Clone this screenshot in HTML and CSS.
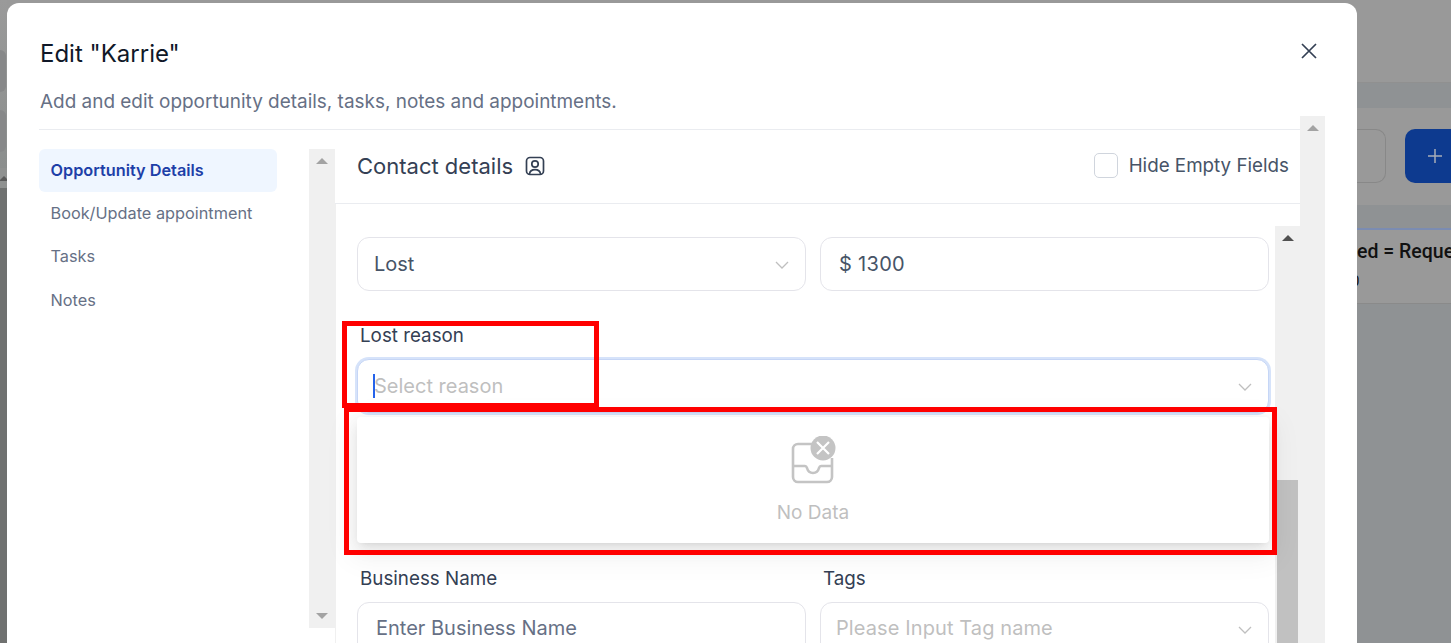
FILE: index.html
```html
<!DOCTYPE html>
<html lang="en">
<head>
    <meta charset="UTF-8">
    <meta name="viewport" content="width=device-width, initial-scale=1.0">
    <title>Edit opportunity</title>
    <link rel="stylesheet" href="styles.css">
</head>
<body>
    <div class="page">
        <!-- dimmed page behind the modal -->
        <div class="backdrop">
            <div class="bg-left">
                <div class="bg-left-top"><span class="bg-blob"></span><span class="bg-blob"></span></div>
                <div class="bg-left-strip"><span class="bg-tri"></span></div>
                <div class="bg-left-bottom"></div>
            </div>
            <div class="bg-right">
                <div class="bg-bar bg-bar-1"></div>
                <div class="bg-gap bg-gap-1"></div>
                <div class="bg-toolbar">
                    <div class="bg-input"></div>
                    <div class="bg-add">
                        <svg width="16" height="16" viewBox="0 0 16 16"><path d="M8 1v14M1 8h14" stroke="#a8adb8" stroke-width="1.5" fill="none"/></svg>
                    </div>
                </div>
                <div class="bg-gap bg-gap-2"></div>
                <div class="bg-card">
                    <div class="bg-card-title">ed = Requested</div>
                    <div class="bg-card-sub">0</div>
                </div>
                <div class="bg-gap bg-gap-3"></div>
            </div>
        </div>

        <div class="modal">
            <div class="modal-head">
                <h2 class="modal-title">Edit "Karrie"</h2>
                <p class="modal-sub">Add and edit opportunity details, tasks, notes and appointments.</p>
                <button class="close-btn" aria-label="Close">
                    <svg width="18" height="18" viewBox="0 0 18 18"><path d="M2 2l14 14M16 2L2 16" stroke="#344054" stroke-width="1.7" fill="none"/></svg>
                </button>
            </div>

            <div class="outer-scroll">
                <div class="outer-main">
                    <div class="columns">
                        <ul class="side-nav">
                            <li class="side-item active">Opportunity Details</li>
                            <li class="side-item">Book/Update appointment</li>
                            <li class="side-item">Tasks</li>
                            <li class="side-item">Notes</li>
                        </ul>
                        <div class="scrollbar side-scrollbar">
                            <span class="arrow-up"></span>
                            <span class="arrow-down"></span>
                        </div>
                        <div class="panel">
                            <div class="panel-head">
                                <div class="panel-title">
                                    Contact details
                                    <svg width="20" height="20" viewBox="0 0 20 20" fill="none" stroke="#344054" stroke-width="1.7">
                                        <rect x="1.5" y="1.5" width="17" height="17" rx="3.5"/>
                                        <circle cx="10" cy="8" r="3.2"/>
                                        <path d="M4.5 18c.4-3 2.5-4.3 5.5-4.3s5.100 1.300 5.500 4.300"/>
                                    </svg>
                                </div>
                                <label class="hide-empty"><span class="checkbox"></span>Hide Empty Fields</label>
                            </div>
                            <div class="panel-body">
                                <div class="form">
                                    <div class="row">
                                        <div class="control">
                                            <span class="value">Lost</span>
                                            <svg class="chevron" width="14" height="8" viewBox="0 0 14 8"><path d="M1 1l6 6 6-6" stroke="#bfbfbf" stroke-width="1.3" fill="none"/></svg>
                                        </div>
                                        <div class="control control-money"><span class="value">$ 1300</span></div>
                                    </div>

                                    <div class="field-label lost-label">Lost reason</div>
                                    <div class="control control-focus">
                                        <span class="caret"></span>
                                        <span class="placeholder">Select reason</span>
                                        <svg class="chevron" width="14" height="8" viewBox="0 0 14 8"><path d="M1 1l6 6 6-6" stroke="#bfbfbf" stroke-width="1.3" fill="none"/></svg>
                                    </div>
                                    <div class="dropdown">
                                        <svg class="empty-icon" width="46" height="50" viewBox="0 0 46 50" fill="none">
                                            <path d="M22 8H8a5 5 0 0 0-5 5v28a5 5 0 0 0 5 5h29a5 5 0 0 0 5-5V22" stroke="#c4c4c4" stroke-width="2.6"/>
                                            <path d="M3 30h12c1 0 1.500.5 2 2 .8 3 3 5 6 5s5.200-2 6-5c.5-1.500 1-2 2-2h11" stroke="#c4c4c4" stroke-width="2.600"/>
                                            <circle cx="33" cy="12" r="12.500" fill="#c4c4c4"/>
                                            <path d="M27 6l12 12M39 6L27 18" stroke="#fff" stroke-width="2.200"/>
                                        </svg>
                                        <div class="empty-text">No Data</div>
                                    </div>

                                    <div class="row row-labels">
                                        <div class="field-label">Business Name</div>
                                        <div class="field-label">Tags</div>
                                    </div>
                                    <div class="row">
                                        <div class="control"><span class="input-hint">Enter Business Name</span></div>
                                        <div class="control control-tags">
                                            <span class="placeholder">Please Input Tag name</span>
                                            <svg class="chevron" width="14" height="8" viewBox="0 0 14 8"><path d="M1 1l6 6 6-6" stroke="#bfbfbf" stroke-width="1.3" fill="none"/></svg>
                                        </div>
                                    </div>
                                </div>
                                <div class="scrollbar form-scrollbar">
                                    <span class="arrow-up dark"></span>
                                    <div class="thumb"></div>
                                </div>
                            </div>
                        </div>
                    </div>
                </div>
                <div class="scrollbar outer-scrollbar">
                    <span class="arrow-up"></span>
                </div>
            </div>
        </div>

        <!-- annotation boxes drawn over the screenshot -->
        <div class="mark mark-label"></div>
        <div class="mark mark-list"></div>
    </div>
</body>
</html>
```

FILE: styles.css
```css
* {
    box-sizing: border-box;
}
html, body {
    margin: 0;
    height: 100%;
    overflow: hidden;
}
body {
    font-family: Inter, "Liberation Sans", sans-serif;
    background-color: #999;
}
.page {
    position: relative;
    width: 1451px;
    height: 643px;
    overflow: hidden;
}

/* backdrop */
.backdrop {
    display: flex;
    justify-content: space-between;
    height: 100%;
}
.bg-left {
    width: 7px;
    display: flex;
    flex-direction: column;
}
.bg-left-top {
    height: 168px;
    padding-top: 50px;
    background: linear-gradient(#9a9a9a, #8b8e8d);
}
.bg-blob {
    display: block;
    width: 6px;
    height: 42px;
    margin-bottom: 18px;
    border-radius: 0 6px 6px 0;
    background-color: #878889;
}
.bg-left-strip {
    height: 20px;
    background-color: #8f9190;
    position: relative;
}
.bg-tri {
    position: absolute;
    left: -1px;
    top: 8px;
    border-left: 5px solid transparent;
    border-right: 5px solid transparent;
    border-bottom: 5px solid #5a5a5a;
}
.bg-left-bottom {
    flex-grow: 1;
    background-color: #6f7170;
}
.bg-right {
    width: 94px;
    display: flex;
    flex-direction: column;
    background-color: #8f9294;
}
.bg-bar-1 {
    height: 83px;
    background-color: #999;
    border-bottom: 1px solid #909090;
}
.bg-gap-1 {
    height: 25px;
}
.bg-toolbar {
    height: 97px;
    background-color: #999;
    display: flex;
    gap: 19px;
    padding-top: 21px;
}
.bg-input {
    flex-shrink: 0;
    width: 29px;
    height: 54px;
    border: 1px solid #888;
    border-left: none;
    border-radius: 0 10px 10px 0;
}
.bg-add {
    flex-shrink: 0;
    width: 60px;
    height: 54px;
    background-color: #0d3a8f;
    border-radius: 10px;
    display: flex;
    align-items: center;
    padding-left: 22px;
}
.bg-gap-2 {
    height: 23px;
}
.bg-card {
    height: 76px;
    background-color: #999;
    border-top: 2px solid #7b8cb2;
    border-bottom: 1px solid #8a8a8a;
    white-space: nowrap;
    overflow: hidden;
    color: #111;
}
.bg-card-title {
    font-family: Roboto, sans-serif;
    font-weight: 500;
    font-size: 19.500px;
    line-height: 24px;
    margin-top: 10px;
}
.bg-card-sub {
    font-family: Roboto, sans-serif;
    font-size: 15px;
    line-height: 20px;
    margin-top: 7px;
    margin-left: -6px;
}

/* modal */
.modal {
    position: absolute;
    left: 7px;
    top: 3px;
    width: 1350px;
    height: 660px;
    background-color: #fff;
    border-radius: 12px;
    padding-left: 32px;
    overflow: hidden;
}
.modal-head {
    position: relative;
    height: 113px;
    padding: 37px 0 0 1px;
}
.modal-title {
    margin: 0;
    font-size: 24px;
    font-weight: 400;
    line-height: 28px;
    color: #101828;
}
.modal-sub {
    margin: 22px 0 0;
    font-size: 18.950px;
    line-height: 24px;
    color: #667085;
}
.close-btn {
    position: absolute;
    right: 39px;
    top: 39px;
    padding: 0;
    border: none;
    background: none;
    line-height: 0;
}
.outer-scroll {
    display: flex;
    width: 1286px;
}
.outer-main {
    flex-grow: 1;
    padding-top: 13px;
}
.columns {
    display: flex;
    border-top: 1px solid #eaecf0;
}
.scrollbar {
    position: relative;
    flex-shrink: 0;
    width: 25px;
    background-color: #f0f0f0;
}
.outer-scrollbar {
    height: 560px;
}
.side-nav {
    list-style: none;
    margin: 19px 32px 0 0;
    padding: 0;
    width: 238px;
    flex-shrink: 0;
}
.side-item {
    height: 43.300px;
    padding: 0 11.500px 2px;
    display: flex;
    align-items: center;
    font-size: 16.300px;
    color: #667085;
}
.side-item.active {
    background-color: #eff6ff;
    border-radius: 6px;
    color: #1d3fa8;
    font-weight: 600;
}
.side-scrollbar {
    width: 26px;
    height: 479px;
    margin-top: 19px;
}
.arrow-up, .arrow-down {
    position: absolute;
    left: 50%;
    margin-left: -6px;
    border-left: 6px solid transparent;
    border-right: 6px solid transparent;
}
.arrow-up {
    top: 9px;
    border-bottom: 6px solid #a3a3a3;
}
.arrow-up.dark {
    border-bottom-color: #505050;
}
.arrow-down {
    bottom: 9px;
    border-top: 6px solid #a3a3a3;
}
.panel {
    flex-grow: 1;
    min-width: 0;
}
.panel-head {
    height: 74px;
    padding: 0 11px 2px 22px;
    display: flex;
    align-items: center;
    justify-content: space-between;
    border-bottom: 1px solid #eaecf0;
}
.panel-title {
    display: flex;
    align-items: center;
    gap: 12px;
    font-size: 22px;
    font-weight: 400;
    color: #344054;
}
.hide-empty {
    display: flex;
    align-items: center;
    gap: 11px;
    font-size: 18.800px;
    color: #475467;
}
.checkbox {
    width: 24px;
    height: 25px;
    border: 1px solid #d0d5dd;
    border-radius: 5px;
}
.panel-body {
    display: flex;
    border-left: 1px solid #f0f0f0;
}
.form {
    flex-grow: 1;
    min-width: 0;
    padding: 33px 6px 0 21px;
}
.form-scrollbar {
    height: 430px;
    margin-top: 22px;
}
.thumb {
    position: absolute;
    left: 2px;
    top: 254px;
    width: 21px;
    height: 180px;
    background-color: #c1c1c1;
}
.row {
    display: grid;
    grid-template-columns: 449px 449px;
    gap: 14px;
}
.control {
    position: relative;
    height: 54px;
    display: flex;
    align-items: center;
    padding-left: 16px;
    border: 1px solid #e4e4ea;
    border-radius: 12px;
    font-size: 20px;
    background-color: #fff;
}
.control-money {
    padding-left: 18px;
}
.control-money .value {
    letter-spacing: .3px;
}
.control-focus {
    padding-left: 15px;
}
.control-tags {
    padding-left: 15px;
}
.value {
    color: #475467;
}
.input-hint {
    padding-left: 2px;
    color: #667085;
    margin-top: -2px;
}
.placeholder {
    color: #bfbfbf;
}
.control-tags .placeholder {
    margin-top: -2px;
    letter-spacing: .1px;
}
.chevron {
    position: absolute;
    right: 16px;
    top: 23px;
}
.field-label {
    font-size: 18.800px;
    line-height: 24px;
    padding: 1px 0 0 3px;
    height: 24px;
    color: #344054;
}
.lost-label {
    margin: 32px 0 12px;
}
.control-focus {
    border-color: #c6d6f6;
    box-shadow: 0 0 0 2px #d6e3fa;
}
.caret {
    width: 2px;
    height: 24px;
    margin-right: -1px;
    background-color: #2563eb;
}
.dropdown {
    position: relative;
    z-index: 2;
    height: 126px;
    margin: 4px 0 23px;
    border-radius: 4px;
    background-color: #fff;
    box-shadow: 0 3px 6px -4px rgba(0,0,0,.12), 0 6px 16px rgba(0,0,0,.08), 0 9px 28px 8px rgba(0,0,0,.05);
    display: flex;
    flex-direction: column;
    align-items: center;
}
.empty-icon {
    margin-top: 19px;
    margin-left: -1px;
}
.empty-text {
    margin-top: 15px;
    font-size: 19px;
    line-height: 24px;
    color: #bfbfbf;
}
.row-labels {
    margin-bottom: 12px;
}

/* red annotation rectangles */
.mark {
    position: absolute;
    z-index: 5;
    border: 5px solid #f00;
}
.mark-label {
    left: 342px;
    top: 321px;
    width: 257px;
    height: 87px;
}
.mark-list {
    left: 344px;
    top: 407px;
    width: 933px;
    height: 148px;
}
```
